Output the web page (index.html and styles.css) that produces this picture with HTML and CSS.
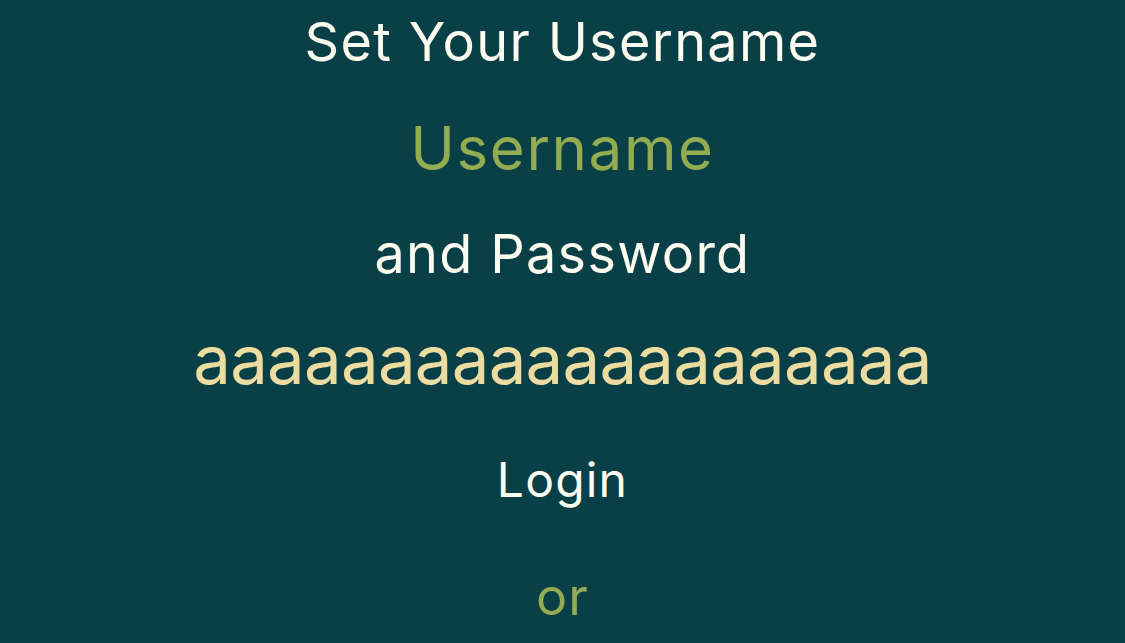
FILE: index.html
```html
<!DOCTYPE html>
<html lang="en">
<head>
    <meta charset="UTF-8">
    <meta name="viewport" content="width=device-width, initial-scale=1.0">
    <title>Set Your Username</title>
    <link rel="stylesheet" href="styles.css">
</head>
<body>
    <div class="screen">
        <div class="line title">Set Your Username</div>
        <div class="line accent">Username</div>
        <div class="line title">and Password</div>
        <div class="line value">aaaaaaaaaaaaaaaaaaaa</div>
        <div class="line title login">Login</div>
        <div class="line accent or">or</div>
    </div>
</body>
</html>
```

FILE: styles.css
```css
* {
    margin: 0;
    padding: 0;
    box-sizing: border-box;
}
html, body {
    height: 100%;
}
body {
    font-family: Inter, "Noto Sans", sans-serif;
    background-color: #093f46;
    overflow: hidden;
}
.screen {
    display: flex;
    flex-direction: column;
    align-items: center;
    gap: 22px;
}
.line {
    height: 84px;
    line-height: 84px;
    white-space: nowrap;
}
.title {
    color: #fdfcf1;
    font-size: 54px;
    letter-spacing: 1.3px;
}
.accent {
    color: #93ab51;
    font-size: 60px;
    letter-spacing: 1.6px;
}
.value {
    color: #ecdca0;
    font-size: 67px;
    letter-spacing: -0.7px;
}
.login {
    margin-top: 14px;
    font-size: 48px;
    letter-spacing: 1.2px;
}
.or {
    margin-top: 11px;
    font-size: 52px;
    letter-spacing: 1px;
}
```
